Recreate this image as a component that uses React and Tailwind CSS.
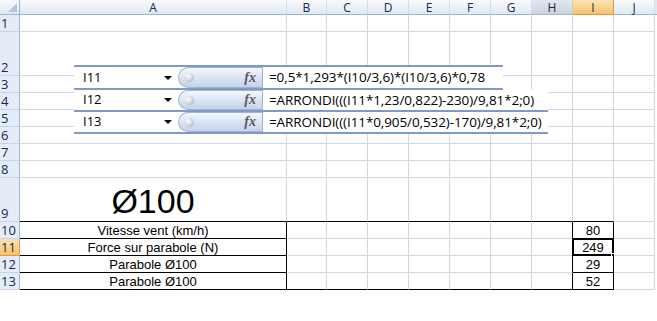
import React from 'react';

const COLS = ['A', 'B', 'C', 'D', 'E', 'F', 'G', 'H', 'I', 'J'];
const ROW_HEIGHTS = [17, 44, 17, 17, 17, 17, 17, 17, 44, 17, 17, 17, 17];

const TEXT = {
  '10A': 'Vitesse vent (km/h)',
  '11A': 'Force sur parabole (N)',
  '12A': 'Parabole Ø100',
  '13A': 'Parabole Ø100',
  '10I': '80',
  '11I': '249',
  '12I': '29',
  '13I': '52',
};

const FORMULAS = [
  { name: 'I11', text: '=0,5*1,293*(I10/3,6)*(I10/3,6)*0,78', width: 'w-[429px]', top: true },
  { name: 'I12', text: '=ARRONDI(((I11*1,23/0,822)-230)/9,81*2;0)', width: 'w-[474px]' },
  { name: 'I13', text: '=ARRONDI(((I11*0,905/0,532)-170)/9,81*2;0)', width: 'w-[474px]' },
];

function bottomBlack(row, col) {
  const framed = col === 'A' || col === 'I';
  if (row === 9 || row === 13) return col !== 'J';
  return row >= 10 && row <= 12 && framed;
}

function rightBlack(row, col) {
  return row >= 10 && row <= 13 && (col === 'A' || col === 'H' || col === 'I');
}

function ColHeader({ col }) {
  if (col === 'I') {
    return (
      <div className="flex items-center justify-center border-r border-b border-[#f29536] bg-gradient-to-b from-[#fbe2b4] to-[#f3c56c] text-[#15294b] text-[12px] leading-[13px]">
        {col}
      </div>
    );
  }
  if (col === 'H') {
    return (
      <div className="flex items-center justify-center border-r border-b border-r-[#c5cedb] border-b-[#9eb6ce] bg-gradient-to-b from-[#e3e8ef] to-[#c9d2de] text-[#15294b] text-[12px] leading-[13px]">
        {col}
      </div>
    );
  }
  return (
    <div className="flex items-center justify-center border-r border-b border-r-[#d5dde8] border-b-[#9eb6ce] bg-gradient-to-b from-[#f8fafd] to-[#e1e8f2] text-[#15294b] text-[12px] leading-[13px]">
      {col}
    </div>
  );
}

function RowHeader({ n }) {
  if (n === 11) {
    return (
      <div className="flex items-end pl-[1px] border-r border-b border-[#f29536] bg-gradient-to-b from-[#fbe2b4] to-[#f3c56c] text-[#15294b] leading-[16px]">
        {n}
      </div>
    );
  }
  return (
    <div className="flex items-end pl-[1px] border-r border-b border-r-[#9eb6ce] border-b-[#c5d3e4] bg-[#e4ecf7] text-[#15294b] leading-[16px]">
      {n}
    </div>
  );
}

function Cell({ row, col }) {
  const b = bottomBlack(row, col) ? 'border-b-black' : 'border-b-[#d0d7e5]';
  const r = rightBlack(row, col) ? 'border-r-black' : 'border-r-[#d0d7e5]';
  const text = TEXT[`${row}${col}`];

  if (row === 9 && col === 'A') {
    return (
      <div className={`flex items-end justify-center border-r border-b ${r} ${b} bg-white`}>
        <span className="font-['Liberation_Sans',Arial,sans-serif] text-[34px] leading-[34px] pb-[3px] text-black">Ø100</span>
      </div>
    );
  }

  return (
    <div className={`relative flex items-center justify-center border-r border-b ${r} ${b} bg-white font-['Liberation_Sans',Arial,sans-serif] text-[13px] text-black leading-[15px]`}>
      {text}
      {row === 11 && col === 'I' && (
        <>
          <div className="absolute -left-[1px] -top-[1px] -right-[1px] -bottom-[1px] border-2 border-black" />
          <div className="absolute -right-[3px] -bottom-[3px] h-[5px] w-[5px] bg-black border border-white" />
        </>
      )}
    </div>
  );
}

function FormulaBar({ name, text, width, top }) {
  return (
    <div className={`flex ${width} ${top ? 'h-[25px] border-t-2' : 'h-[22px]'} border-b-2 border-[#7f9bc3] bg-white`}>
      <div className="flex w-[104px] shrink-0 items-center justify-between pl-[9px] pr-[6px] font-['Open_Sans',sans-serif] text-[13px] text-black">
        <span>{name}</span>
        <span className="h-0 w-0 border-l-[4px] border-r-[4px] border-t-[4px] border-l-transparent border-r-transparent border-t-black" />
      </div>
      <div className="flex w-[84px] shrink-0 items-center justify-between rounded-l-full border border-r-0 border-[#9fb4d2] bg-gradient-to-b from-[#f4f7fc] via-[#dbe5f3] to-[#c3d3ea] pl-[6px] pr-[6px]">
        <span className="h-[9px] w-[9px] rounded-full bg-[radial-gradient(circle_at_35%_35%,#ffffff,#c9ced6_60%,#9aa3ae)]" />
        <span className="font-['Liberation_Serif',serif] text-[14px] font-bold italic leading-none text-[#5a5a5a]">fx</span>
      </div>
      <div className="w-[1px] shrink-0 bg-[#9fb2cc]" />
      <div className="flex min-w-0 flex-1 items-center pl-[6px] font-['Open_Sans',sans-serif] text-[13.5px] tracking-[-0.1px] text-black whitespace-nowrap">
        {text}
      </div>
    </div>
  );
}

export default function App() {
  return (
    <div className="relative h-[321px] w-[657px] overflow-hidden bg-white font-['Open_Sans',sans-serif] text-[13px]">
      <div className="grid grid-cols-[20px_267px_40px_41px_41px_41px_41px_41px_41px_41px_41px_2px] grid-rows-[15px_17px_44px_17px_17px_17px_17px_17px_17px_44px_17px_17px_17px_17px]">
        <div className="relative border-r border-b border-r-[#9eb6ce] border-b-[#9eb6ce] bg-gradient-to-b from-[#f8fafd] to-[#e1e8f2]">
          <div className="absolute right-[2px] bottom-[2px] h-0 w-0 border-l-[9px] border-l-transparent border-b-[9px] border-b-[#b4c6dc]" />
        </div>
        {COLS.map((c) => (
          <ColHeader key={c} col={c} />
        ))}
        <div className="bg-[#e1e8f2] border-b border-[#9eb6ce]" />

        {ROW_HEIGHTS.map((_, i) => {
          const row = i + 1;
          return (
            <React.Fragment key={row}>
              <RowHeader n={row} />
              {COLS.map((c) => (
                <Cell key={c} row={row} col={c} />
              ))}
              <div className="bg-white" />
            </React.Fragment>
          );
        })}
      </div>

      <div className="absolute left-[74px] top-[65px] flex flex-col">
        {FORMULAS.map((f) => (
          <FormulaBar key={f.name} {...f} />
        ))}
      </div>
    </div>
  );
}
